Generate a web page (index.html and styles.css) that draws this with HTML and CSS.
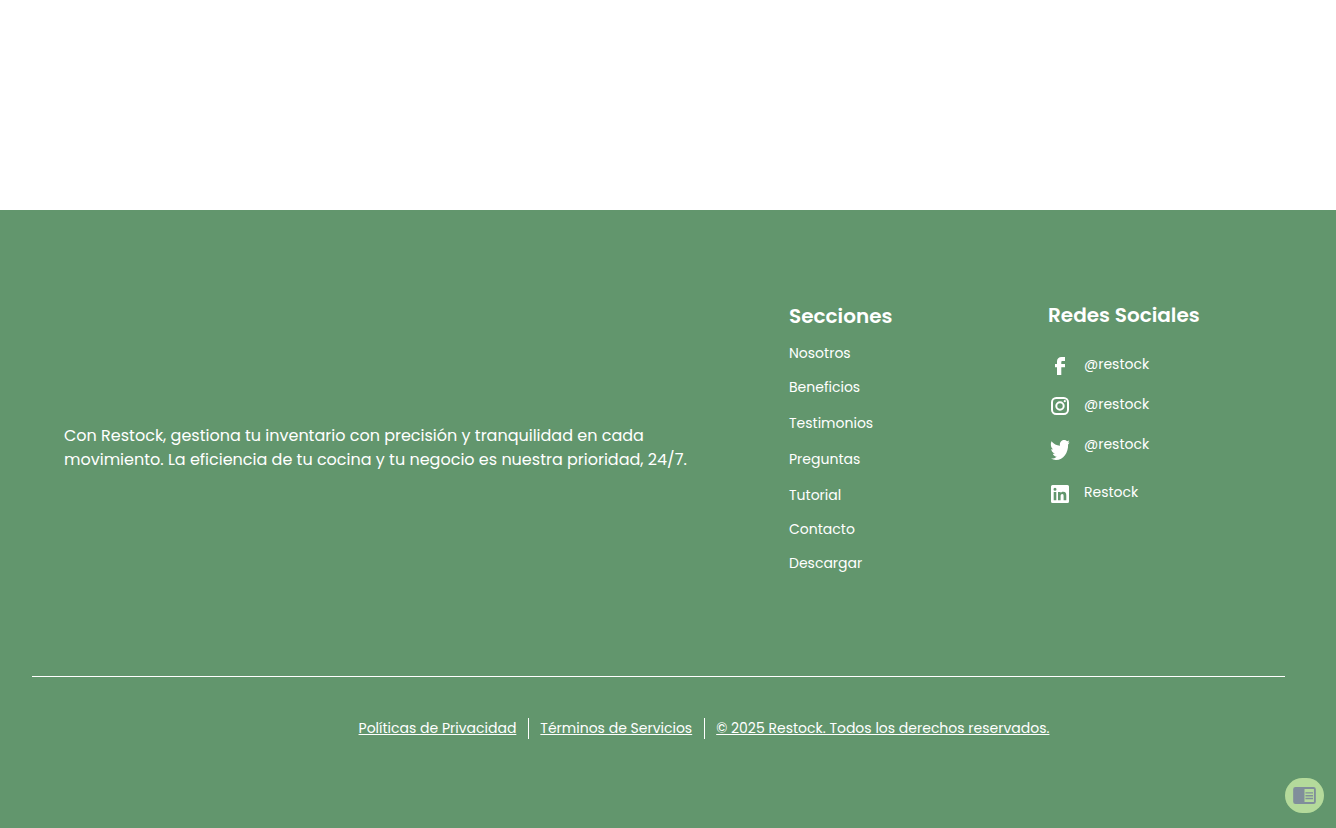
FILE: index.html
```html
<!DOCTYPE html>
<html lang="es">
<head>
<meta charset="utf-8">
<meta name="viewport" content="width=device-width, initial-scale=1">
<title>Restock</title>
<link rel="stylesheet" href="styles.css">
</head>
<body>
<main class="content"></main>
<footer class="footer">
  <div class="footer-main">
    <p class="about">Con Restock, gestiona tu inventario con precisión y tranquilidad en cada<br>movimiento. La eficiencia de tu cocina y tu negocio es nuestra prioridad, 24/7.</p>
    <nav class="sections" aria-labelledby="sections-title">
      <h2 class="title" id="sections-title">Secciones</h2>
      <ul class="section-list">
        <li><a href="#nosotros">Nosotros</a></li>
        <li class="roomy"><a href="#beneficios">Beneficios</a></li>
        <li class="roomy"><a href="#testimonios">Testimonios</a></li>
        <li class="roomy"><a href="#preguntas">Preguntas</a></li>
        <li><a href="#tutorial">Tutorial</a></li>
        <li><a href="#contacto">Contacto</a></li>
        <li><a href="#descargar">Descargar</a></li>
      </ul>
    </nav>
    <section class="social">
      <h2 class="title">Redes Sociales</h2>
      <ul class="social-list">
        <li><a href="#facebook"><svg class="icon" viewBox="0 0 24 24" aria-hidden="true"><path d="M17 3v4h-2.500c-.8 0-1.200.4-1.200 1.200V10H17v3.200h-3.700V21H9v-7.800H7V10h2V7.300C9 4.600 10.800 3 13.500 3z"/></svg><span>@restock</span></a></li>
        <li><a href="#instagram"><svg class="icon" viewBox="0 0 24 24" aria-hidden="true"><rect x="4" y="4" width="16" height="16" rx="4.200" fill="none" stroke="currentColor" stroke-width="2"/><circle cx="12" cy="12" r="3.700" fill="none" stroke="currentColor" stroke-width="2"/><circle cx="16.800" cy="7.200" r="1.100"/></svg><span>@restock</span></a></li>
        <li class="twitter"><a href="#twitter"><svg class="icon" viewBox="0 0 24 24" aria-hidden="true"><path d="M3.400 3.200C5.700 5.900 8.600 7.500 12 7.700C11.400 4.500 13.300 2 16 2C17.300 2 18.400 2.500 19.100 3.300L21.200 2.500L20.200 4.800L21.600 4.400L20.100 6.500C20.400 14.500 15.500 22 8 22C6.200 22 4.500 21.500 3 20.600C5.200 20.700 7.300 20 8.700 18.700C6.900 18.600 5.400 17.400 4.800 15.700C5.500 15.800 6.100 15.800 6.700 15.600C4.700 15 3.300 13.200 3.300 11.100C3.900 11.400 4.500 11.600 5.200 11.600C2.900 9.700 2.200 6.500 3.400 3.200z"/></svg><span>@restock</span></a></li>
        <li><a href="#linkedin"><svg class="icon" viewBox="0 0 24 24" aria-hidden="true"><path fill-rule="evenodd" d="M4.500 3h15A1.500 1.500 0 0 1 21 4.500v15a1.500 1.500 0 0 1-1.500 1.500h-15A1.500 1.500 0 0 1 3 19.500v-15A1.500 1.500 0 0 1 4.500 3zM5.700 10v8.300h2.600V10zM7 5.800a1.500 1.500 0 1 0 0 3a1.500 1.500 0 0 0 0-3zM10 10v8.300h2.600v-4.100c0-1.100.4-2.100 1.600-2.100s1.400.9 1.400 2.100v4.100h2.700v-4.600c0-2.300-.6-3.900-3.100-3.900c-1.300 0-2.200.6-2.600 1.300V10z"/></svg><span>Restock</span></a></li>
      </ul>
    </section>
  </div>
  <div class="legal">
    <a href="#privacidad">Políticas de Privacidad</a>
    <a href="#terminos">Términos de Servicios</a>
    <a href="#derechos">© 2025 Restock. Todos los derechos reservados.</a>
  </div>
</footer>
<button class="reader" type="button" aria-label="Modo lectura">
  <svg class="reader-icon" viewBox="0 0 24 18" aria-hidden="true"><path fill-rule="evenodd" d="M2.500 0h19a2.500 2.500 0 0 1 2.500 2.500v13a2.500 2.500 0 0 1-2.500 2.500h-19a2.500 2.500 0 0 1-2.500-2.500v-13a2.500 2.500 0 0 1 2.500-2.500zM12 2v14h10V2zM13 5.500h8v1.500h-8zM13 8.500h8v1.500h-8zM13 11.500h8v1.500h-8z"/></svg>
</button>
</body>
</html>
```
FILE: styles.css
```css
* { box-sizing: border-box; }
body {
  margin: 0;
  background: #fff;
  color: #fff;
  font-family: Poppins, Inter, sans-serif;
  font-size: 14px;
  line-height: 20px;
}
h2, p, ul { margin: 0; padding: 0; }
ul { list-style: none; }
a { color: inherit; text-decoration: none; }
.content { min-height: 210px; }
.footer {
  min-height: 618px;
  background: #62966d;
  padding: 64px 51px 88px 32px;
}
.footer-main {
  display: grid;
  grid-template-columns: 725fr 259fr 237fr;
  min-height: 403px;
  padding: 28px 0 0 32px;
  border-bottom: 1px solid #fff;
}
.about {
  padding-top: 122px;
  font-size: 16px;
  line-height: 24px;
  white-space: nowrap;
}
.title {
  font-size: 20px;
  font-weight: 600;
  line-height: 28px;
}
.section-list {
  display: grid;
  gap: 14px;
  padding-top: 13px;
}
.section-list .roomy { padding-bottom: 2px; }
.social .title { line-height: 26px; }
.social-list {
  display: grid;
  gap: 16px;
  padding-top: 26px;
}
.social-list a { display: flex; gap: 12px; height: 24px; }
.social-list .twitter { height: 32px; }
.twitter .icon { margin-top: 4px; }
.icon {
  width: 24px;
  height: 24px;
  flex: none;
  fill: currentColor;
}
.legal {
  display: flex;
  justify-content: center;
  padding-top: 41px;
  padding-left: 92px;
  line-height: 21px;
}
.legal a { padding: 0 12px 0 11px; text-decoration: underline; }
.legal a + a { border-left: 1px solid #fff; }
.reader {
  position: fixed;
  right: 12px;
  bottom: 15px;
  display: grid;
  place-items: center;
  width: 39px;
  height: 35px;
  padding: 0;
  border: 0;
  border-radius: 18px;
  background: #b4da9b;
  color: #808e9b;
}
.reader-icon { width: 23px; height: 17px; fill: currentColor; }
```
